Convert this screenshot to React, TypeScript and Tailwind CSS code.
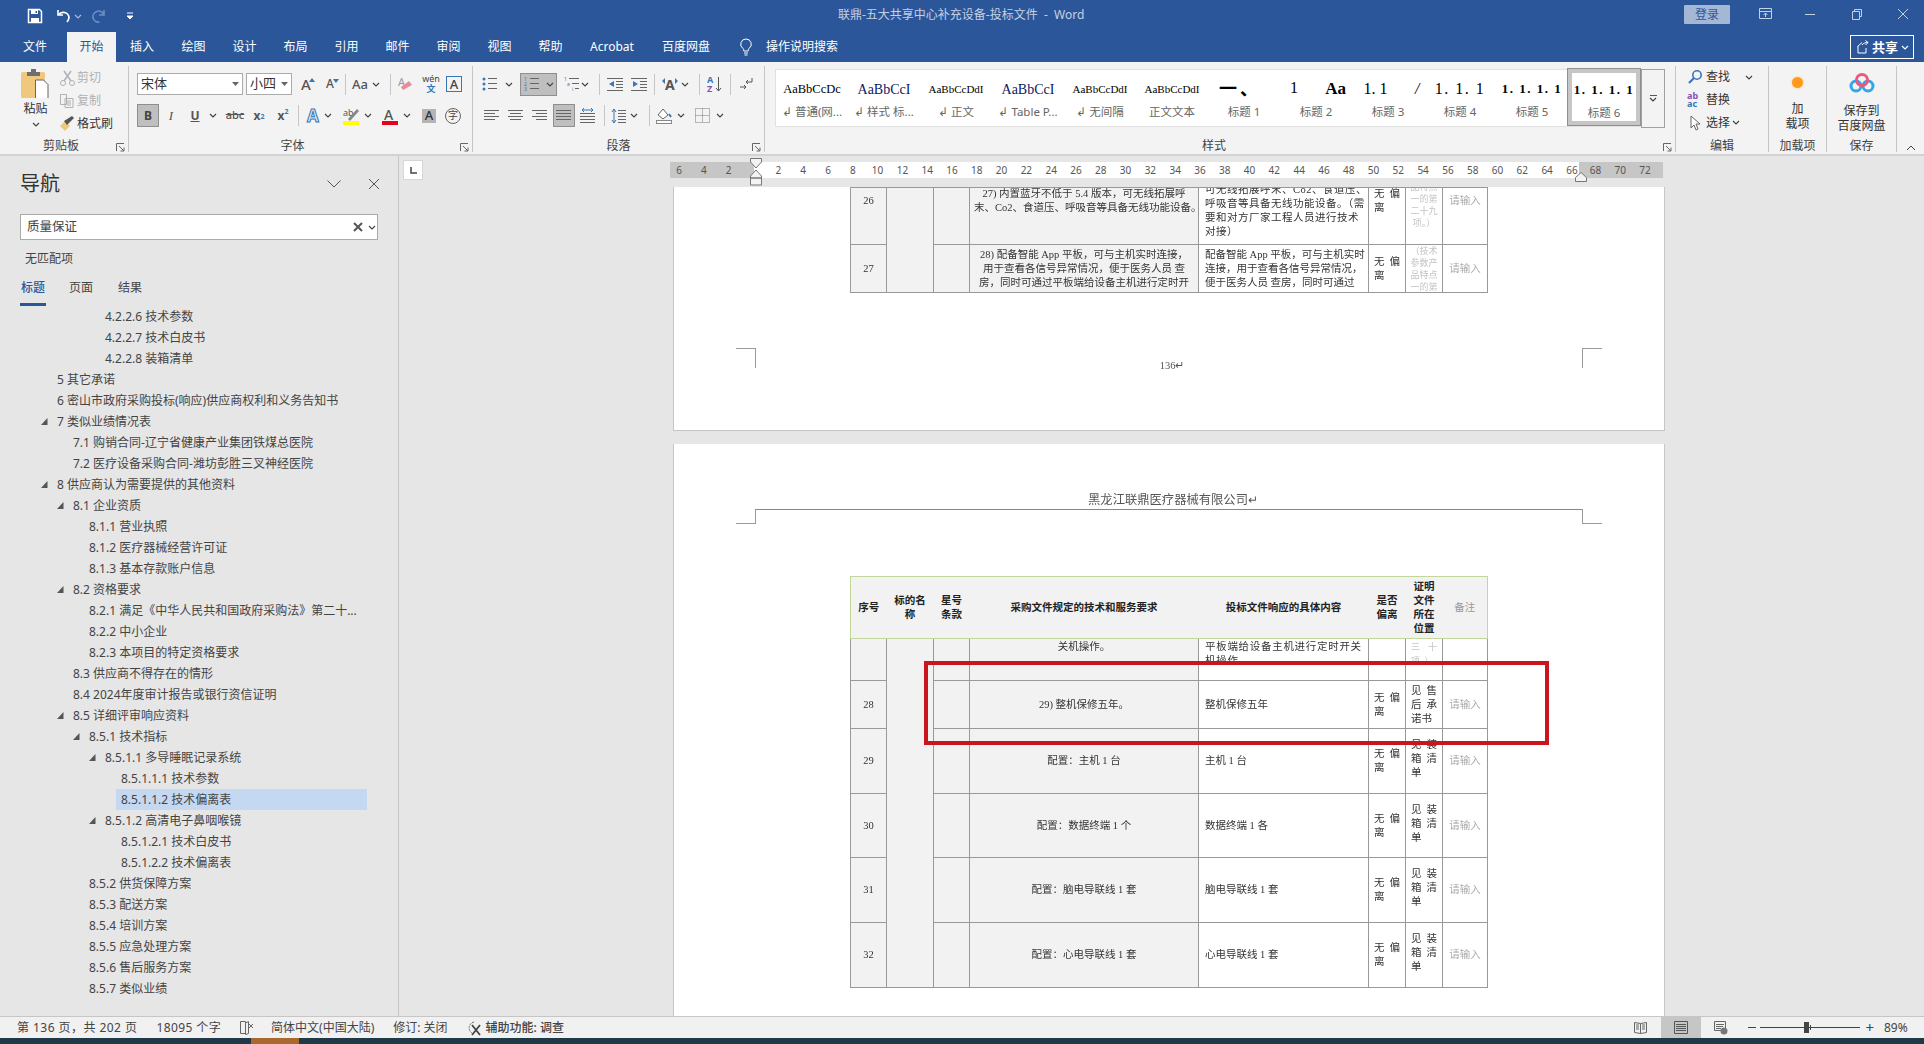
import React from "react";

const UI = "[font-family:'Noto_Sans','Noto_Sans_CJK_SC',sans-serif]";
const SERIF = "[font-family:'Liberation_Serif','Noto_Sans_CJK_SC',serif]";

const Chev = ({ c = "#444" }: { c?: string }) => (
  <svg width="8" height="5" viewBox="0 0 8 5" className="shrink-0"><path d="M1 1l3 3 3-3" fill="none" stroke={c} strokeWidth="1.2" /></svg>
);
const Box = ({ className = "", children }: { className?: string; children?: React.ReactNode }) => (
  <div className={`flex items-center justify-center shrink-0 ${className}`}>{children}</div>
);
const Div = ({ className = "" }: { className?: string }) => <div className={`w-px h-[21px] bg-[#c6c6c6] shrink-0 ${className}`} />;
const Ic = ({ children, w = 20, h = 20 }: { children: React.ReactNode; w?: number; h?: number }) => (
  <svg width={w} height={h} viewBox={`0 0 ${w} ${h}`} className="shrink-0">{children}</svg>
);
const Lines = ({ d, c = "#666" }: { d: number[][]; c?: string }) => (
  <>{d.map((l, i) => <path key={i} d={`M${l[0]} ${l[2] + 0.5}H${l[1]}`} stroke={c} />)}</>
);
const Launcher = () => (
  <svg width="9" height="9" viewBox="0 0 9 9" className="absolute right-[3px] bottom-0"><path d="M0.5 8V0.5H8M3 3l5 5M8 4.5V8H4.5" fill="none" stroke="#666" /></svg>
);

const Group = ({ w, label, children, launcher, labelClass = "" }: { w: string; label: string; children: React.ReactNode; launcher?: boolean; labelClass?: string }) => (
  <div className={`relative mt-[4px] h-[86px] border-r border-[#c6c6c6] shrink-0 flex flex-col ${w}`}>
    <div className="h-[72px] shrink-0">{children}</div>
    <div className={`text-center text-[12px] leading-[16px] text-[#444] ${labelClass}`}>{label}</div>
    {launcher && <Launcher />}
  </div>
);

const tabs: [string, string][] = [
  ["插入", "w-[52px]"], ["绘图", "w-[51px]"], ["设计", "w-[51px]"], ["布局", "w-[51px]"], ["引用", "w-[51px]"], ["邮件", "w-[51px]"],
  ["审阅", "w-[51px]"], ["视图", "w-[51px]"], ["帮助", "w-[51px]"], ["Acrobat", "w-[72px]"], ["百度网盘", "w-[76px]"],
];

function TitleBar() {
  return (
    <div className="h-[32px] bg-[#2b579a] flex items-center relative shrink-0">
      <div className="ml-[27px]"><Ic w={16} h={16}><path d="M1.5 1.5h11l2 2v11h-13z" fill="none" stroke="#fff" strokeWidth="1.5" /><path d="M4 2h7v4H4zM4 10h8v4H4z" fill="#fff" /><path d="M8.5 3h1.5v2H8.5z" fill="#2b579a" /></Ic></div>
      <div className="ml-[13px]"><Ic w={16} h={16}><path d="M2 2v5h5" fill="none" stroke="#fff" strokeWidth="1.6" /><path d="M2.5 6.5C5 4 9 3.5 11.5 6c2 2.2 1.5 5.5-.5 8" fill="none" stroke="#fff" strokeWidth="1.6" /></Ic></div>
      <div className="ml-[2px]"><Chev c="#a9bcd8" /></div>
      <div className="ml-[9px]"><Ic w={16} h={16}><path d="M13 2v5H8" fill="none" stroke="#6f8fbf" strokeWidth="1.6" /><path d="M12.5 6.5A5.5 5.5 0 1 0 8.5 14" fill="none" stroke="#6f8fbf" strokeWidth="1.6" /></Ic></div>
      <div className="ml-[18px]"><Ic w={10} h={10}><path d="M2 2h6M2 5l3 3 3-3z" fill="#fff" stroke="#fff" /></Ic></div>
      <div className="absolute left-[838px] top-0 h-[30px] flex items-center text-[12px] text-[#c4d0e4] whitespace-nowrap">联鼎-五大共享中心补充设备-投标文件 &nbsp;-&nbsp; Word</div>
      <div className="ml-auto flex items-center">
        <Box className="w-[46px] h-[19px] bg-[#a4b8d5] text-[#2b579a] text-[12px] rounded-[1px] -mt-[3px]">登录</Box>
        <Box className="ml-[24px] w-[22px] -mt-[4px]"><Ic w={14} h={14}><path d="M1.5 1.5h12v10h-12zM1.5 4.5h12M7.5 10V6M5.5 8l2-2 2 2" fill="none" stroke="#c4d0e4" /></Ic></Box>
        <Box className="ml-[23px] w-[22px] -mt-[4px]"><Ic w={12} h={12}><path d="M1 6.5h10" stroke="#c4d0e4" /></Ic></Box>
        <Box className="ml-[25px] w-[22px] -mt-[4px]"><Ic w={12} h={12}><path d="M1.5 3.5h7v8h-7zM3.5 3V1.5h7v7H9" fill="none" stroke="#c4d0e4" /></Ic></Box>
        <Box className="ml-[24px] w-[22px] mr-[10px] -mt-[4px]"><Ic w={12} h={12}><path d="M1 1l10 10M11 1L1 11" stroke="#c4d0e4" /></Ic></Box>
      </div>
    </div>
  );
}

function TabBar() {
  return (
    <div className="h-[30px] bg-[#2b579a] flex items-center relative shrink-0 text-[12px] text-white">
      <Box className="ml-[9px] w-[52px] h-full">文件</Box>
      <Box className="ml-[6px] w-[49px] h-full bg-[#f3f3f3] text-[#2b579a]">开始</Box>
      {tabs.map(([t, w]) => <Box key={t} className={`${w} h-full`}>{t}</Box>)}
      <div className="ml-[14px]"><Ic w={16} h={20}><path d="M8 2a5.2 5.2 0 0 0-3 9.5c.6.6.8 1.3.8 2.5h4.4c0-1.2.2-1.9.8-2.5A5.2 5.2 0 0 0 8 2zM6 16h4M6.5 18h3" fill="none" stroke="#fff" /></Ic></div>
      <div className="ml-[12px]">操作说明搜索</div>
      <div className="ml-auto mr-[10px] w-[64px] h-[24px] border border-white flex items-center pl-[5px] gap-[3px]">
        <Ic w={13} h={14}><path d="M2 6v7h8V8M1.5 6.5L6 2.5M6 5c1.5-2 3.5-2.5 6-2.5M9.5 .5l2.5 2-2.5 2.5" fill="none" stroke="#fff" /></Ic>
        <span className="font-semibold text-[13px] leading-none">共享</span>
        <Chev c="#fff" />
      </div>
    </div>
  );
}

function Clipboard() {
  return (
    <Group w="w-[129px]" label="剪贴板" launcher labelClass="pr-[6px]">
      <div className="flex">
        <div className="w-[59px] flex flex-col items-center pl-[12px] pt-[3px] shrink-0">
          <Ic w={30} h={29}>
            <rect x="0" y="3" width="24" height="26" rx="1.5" fill="#f0c87d" />
            <path d="M6 3h4V0h5v3h4v4H6z" fill="#6e6e6e" />
            <path d="M14.5 11h8l4.5 4.5V30h-12.5z" fill="#fff" stroke="#666" />
          </Ic>
          <div className="text-[12px] leading-[14px] mt-[4px] text-[#333]">粘贴</div>
          <div className="mt-[6px]"><Chev /></div>
        </div>
        <div className="flex flex-col text-[12px] text-[#b1b1b1] pt-[1px]">
          <div className="h-[22px] flex items-center">
            <Ic w={18} h={16}><circle cx="4" cy="13" r="2.5" fill="none" stroke="#b1b1b1" /><circle cx="13" cy="13" r="2.5" fill="none" stroke="#b1b1b1" /><path d="M5 11L12 1M12 11L5 1" stroke="#b1b1b1" strokeWidth="1.5" /></Ic><span>剪切</span>
          </div>
          <div className="h-[23px] flex items-center">
            <Ic w={18} h={16}><path d="M1.5 1.5h6v10h-6zM6 5.5h8v9H6zM8 8h4M8 10h4M8 12h4" fill="#f3f3f3" stroke="#b1b1b1" /></Ic><span>复制</span>
          </div>
          <div className="h-[23px] flex items-center text-[#333]">
            <Ic w={18} h={16}><path d="M1 10l5-5 5 5-5 5z" fill="#f0c87d" /><path d="M5 5l3 4 7-7-2-2z" fill="#555" /></Ic><span className="ml-0">格式刷</span>
          </div>
        </div>
      </div>
    </Group>
  );
}

const A = ({ cls = "", size = "text-[16px]", children = "A" }: { cls?: string; size?: string; children?: React.ReactNode }) => (
  <span className={`${size} leading-none font-medium text-[#555] ${cls}`}>{children}</span>
);

function FontGroup() {
  return (
    <Group w="w-[344px]" label="字体" launcher labelClass="pr-[16px]">
      <div className="pl-[8px] pt-[7px]">
        <div className="flex items-center h-[22px]">
          <div className="w-[106px] h-[22px] bg-white border border-[#ababab] flex items-center justify-between px-[3px] text-[13px] text-[#333] shrink-0">宋体<svg width="7" height="4"><path d="M0 0h7L3.5 4z" fill="#666" /></svg></div>
          <div className="ml-[3px] w-[46px] h-[22px] bg-white border border-[#ababab] flex items-center justify-between px-[3px] text-[13px] text-[#333] shrink-0">小四<svg width="7" height="4"><path d="M0 0h7L3.5 4z" fill="#666" /></svg></div>
          <Box className="ml-[2px] w-[24px] relative"><A size="text-[15px]" /><svg width="6" height="4" className="absolute right-[3px] top-[1px]"><path d="M0 4h6L3 0z" fill="#3a75b5" /></svg></Box>
          <Box className="w-[24px] relative"><A size="text-[12px]" /><svg width="6" height="4" className="absolute right-[3px] top-[1px]"><path d="M0 0h6L3 4z" fill="#3a75b5" /></svg></Box>
          <Div className="ml-[3px]" />
          <Box className="ml-[4px] w-[20px]"><A size="text-[13px]">Aa</A></Box>
          <Box className="w-[12px]"><Chev /></Box>
          <Div className="ml-[8px]" />
          <Box className="ml-[3px] w-[24px]"><Ic w={20} h={18}><text x="2" y="11" fontSize="11" fill="#999">A</text><path d="M7 15l-2-3 8-6 3 4z" fill="#e88b9a" /></Ic></Box>
          <Box className="ml-px w-[24px] flex-col text-[9px] leading-[10px]"><span className="text-[#444]">wén</span><span className="text-[#2f78c0] font-bold">文</span></Box>
          <Box className="ml-[3px] w-[16px] h-[16px] border border-[#3a75b5] text-[13px] font-medium text-[#444] leading-none">A</Box>
        </div>
        <div className="flex items-center h-[23px] mt-[9px]">
          <Box className="w-[22px] h-[23px] bg-[#bfbfbf] border border-[#8f8f8f] text-[12px] font-bold text-[#444]">B</Box>
          <Box className="w-[24px] text-[13px] italic text-[#555] [font-family:'Liberation_Serif',serif]">I</Box>
          <Box className="w-[24px] text-[12px] font-bold underline text-[#555]">U</Box>
          <Box className="w-[12px]"><Chev /></Box>
          <Box className="ml-[4px] w-[24px] text-[11px] font-medium line-through text-[#555]">abc</Box>
          <Box className="w-[24px] text-[12px] font-bold text-[#555]">x<sub className="text-[7px] text-[#3a75b5]">2</sub></Box>
          <Box className="w-[24px] text-[12px] font-bold text-[#555]">x<sup className="text-[7px] text-[#3a75b5]">2</sup></Box>
          <Div className="ml-[3px]" />
          <Box className="ml-[4px] w-[20px]"><span className="text-[17px] font-bold leading-none text-[#dbe8f6] [-webkit-text-stroke:1px_#3a75b5]">A</span></Box>
          <Box className="w-[10px]"><Chev /></Box>
          <Box className="ml-[8px] w-[20px]"><Ic w={18} h={18}><text x="1" y="9" fontSize="9" fill="#555">ab</text><path d="M6 12l9-10 2 2-9 10z" fill="#888" /><rect x="1" y="14" width="16" height="4" fill="#ffff00" /></Ic></Box>
          <Box className="ml-px w-[12px]"><Chev /></Box>
          <Box className="ml-[6px] w-[20px]"><Ic w={18} h={18}><text x="3" y="13" fontSize="14" fill="#555" fontWeight="500">A</text><rect x="1" y="14" width="16" height="4" fill="#e8001c" /></Ic></Box>
          <Box className="ml-px w-[12px]"><Chev /></Box>
          <Box className="ml-[6px] w-[20px]"><div className="w-[14px] h-[14px] bg-[#b5b5b5] flex items-center justify-center text-[13px] font-medium text-[#333] leading-none">A</div></Box>
          <Box className="ml-[4px] w-[20px]"><div className="w-[16px] h-[16px] rounded-full border border-[#666] flex items-center justify-center text-[10px] text-[#444]">字</div></Box>
        </div>
      </div>
    </Group>
  );
}

const Bul = ({ nums }: { nums?: boolean }) => (
  <Ic w={18} h={16}>
    {nums ? <text x="0" y="5" fontSize="5" fill="#3a75b5">1</text> : <circle cx="2" cy="3" r="1.5" fill="#3a75b5" />}
    {nums ? <text x="0" y="10" fontSize="5" fill="#3a75b5">2</text> : <circle cx="2" cy="8" r="1.5" fill="#3a75b5" />}
    {nums ? <text x="0" y="15" fontSize="5" fill="#3a75b5">3</text> : <circle cx="2" cy="13" r="1.5" fill="#3a75b5" />}
    <Lines d={[[6, 15, 2], [6, 15, 7], [6, 15, 12]]} />
  </Ic>
);

function ParaGroup() {
  const al = (s: number[][]) => <Ic w={16} h={14}><Lines d={s} /></Ic>;
  return (
    <Group w="w-[292px]" label="段落" launcher>
      <div className="pt-[7px]">
        <div className="flex items-center h-[22px]">
          <Box className="ml-[8px] w-[20px]"><Bul /></Box>
          <Box className="ml-[2px] w-[12px]"><Chev /></Box>
          <div className="ml-[5px] w-[37px] h-[23px] bg-[#bfbfbf] border border-[#8f8f8f] flex items-center justify-center gap-[4px] shrink-0"><Bul nums /><Chev /></div>
          <Box className="ml-[7px] w-[16px]"><Ic w={16} h={16}><text x="0" y="5" fontSize="5" fill="#3a75b5">1</text><text x="3" y="10" fontSize="5" fill="#3a75b5">a</text><text x="8" y="15" fontSize="5" fill="#3a75b5">i</text><Lines d={[[5, 15, 2], [8, 15, 7], [11, 15, 12]]} /></Ic></Box>
          <Box className="w-[10px]"><Chev /></Box>
          <Div className="ml-[9px]" />
          <Box className="ml-[5px] w-[20px]"><Ic w={17} h={14}><Lines d={[[0, 16, 1], [9, 16, 4], [9, 16, 7], [9, 16, 10], [0, 16, 13]]} /><path d="M7 4v6L2 7z" fill="#3a75b5" /></Ic></Box>
          <Box className="ml-[4px] w-[20px]"><Ic w={17} h={14}><Lines d={[[0, 16, 1], [9, 16, 4], [9, 16, 7], [9, 16, 10], [0, 16, 13]]} /><path d="M2 4v6l5-3z" fill="#3a75b5" /></Ic></Box>
          <Div className="ml-[5px]" />
          <Box className="ml-[5px] w-[20px]"><Ic w={18} h={16}><text x="4" y="14" fontSize="14" fontWeight="700" fill="#555">A</text><path d="M1 5l3-3v6zM17 5l-3-3v6z" fill="#3a75b5" /></Ic></Box>
          <Box className="w-[10px]"><Chev /></Box>
          <Div className="ml-[9px]" />
          <Box className="ml-[5px] w-[20px]"><Ic w={16} h={18}><text x="0" y="8" fontSize="9" fontWeight="700" fill="#3a75b5">A</text><text x="0" y="17" fontSize="9" fontWeight="700" fill="#8a4fb5">Z</text><path d="M11.5 2v14M9 13l2.5 3 2.5-3" fill="none" stroke="#555" /></Ic></Box>
          <Div className="ml-[5px]" />
          <Box className="ml-[5px] w-[20px]"><Ic w={14} h={14}><path d="M13 1v4H7M9 3L7 5l2 2" fill="none" stroke="#555" /><path d="M1 10h6M5 8l2 2-2 2" fill="none" stroke="#555" /></Ic></Box>
        </div>
        <div className="flex items-center h-[23px] mt-[9px]">
          <Box className="ml-[9px] w-[20px]">{al([[0, 15, 1], [0, 11, 4], [0, 15, 7], [0, 11, 10]])}</Box>
          <Box className="ml-[4px] w-[20px]">{al([[0, 15, 1], [2, 13, 4], [0, 15, 7], [2, 13, 10]])}</Box>
          <Box className="ml-[4px] w-[20px]">{al([[0, 15, 1], [4, 15, 4], [0, 15, 7], [4, 15, 10]])}</Box>
          <Box className="ml-[3px] w-[22px] h-[23px] bg-[#bfbfbf] border border-[#8f8f8f]">{al([[0, 15, 1], [0, 15, 4], [0, 15, 7], [0, 15, 10]])}</Box>
          <Box className="ml-[3px] w-[20px]"><Ic w={16} h={16}><Lines d={[[0, 15, 5], [0, 15, 8], [0, 15, 11], [0, 15, 14]]} /><path d="M2 2h11M4 0L2 2l2 2M11 0l2 2-2 2" fill="none" stroke="#3a75b5" /></Ic></Box>
          <Div className="ml-[6px]" />
          <Box className="ml-[4px] w-[20px]"><Ic w={16} h={16}><path d="M3 1v14M1 4l2-3 2 3M1 12l2 3 2-3" fill="none" stroke="#3a75b5" /><Lines d={[[7, 15, 2], [7, 15, 5], [7, 15, 8], [7, 15, 11], [7, 15, 14]]} /></Ic></Box>
          <Box className="w-[10px]"><Chev /></Box>
          <Div className="ml-[10px]" />
          <Box className="ml-[4px] w-[20px]"><Ic w={17} h={17}><path d="M2 8l5-6 5 6-5 4z" fill="#fff" stroke="#666" /><path d="M13 7l2 3" stroke="#3a75b5" strokeWidth="2" /><rect x="0.5" y="13.5" width="15" height="3" fill="#fff" stroke="#888" /></Ic></Box>
          <Box className="ml-[2px] w-[10px]"><Chev /></Box>
          <Box className="ml-[6px] w-[20px]"><Ic w={15} h={15}><path d="M.5.5h14v14H.5zM7.5.5v14M.5 7.5h14" fill="none" stroke="#777" strokeDasharray="1 1" /></Ic></Box>
          <Box className="ml-[3px] w-[10px]"><Chev /></Box>
        </div>
      </div>
    </Group>
  );
}

const styles = [
  { s: <span className="text-[12.5px]">AaBbCcDc</span>, l: "↲ 普通(网..." },
  { s: <span className="text-[14px] text-[#0b1a66]">AaBbCcI</span>, l: "↲ 样式 标..." },
  { s: <span className="text-[11px]">AaBbCcDdI</span>, l: "↲ 正文" },
  { s: <span className="text-[14px] text-[#0b1a66]">AaBbCcI</span>, l: "↲ Table P..." },
  { s: <span className="text-[11px]">AaBbCcDdI</span>, l: "↲ 无间隔" },
  { s: <span className="text-[11px]">AaBbCcDdI</span>, l: "正文文本" },
  { s: <span className="text-[18px] font-bold tracking-[3px] -ml-[8px]">一、</span>, l: "标题 1" },
  { s: <span className="flex justify-between w-full pl-[4px] text-[16px]"><span>1</span><span className="text-[17px] font-bold">Aa</span></span>, l: "标题 2" },
  { s: <span className="flex justify-between w-full pl-[4px] -mr-[3px] text-[16px]"><span>1. 1</span><span className="italic">/</span></span>, l: "标题 3" },
  { s: <span className="text-[16px] tracking-[1.5px]">1. 1. 1</span>, l: "标题 4" },
  { s: <span className="text-[13px] font-bold tracking-[1.5px]">1. 1. 1. 1</span>, l: "标题 5" },
  { s: <span className="text-[13px] font-bold tracking-[1.5px]">1. 1. 1. 1</span>, l: "标题 6" },
];

function StylesGroup() {
  return (
    <Group w="w-[911px]" label="样式" launcher labelClass="pr-[12px]">
      <div className="pl-[10px] pt-[3px] flex">
        <div className="w-[867px] h-[58px] bg-white border border-[#e1e1e1] flex shrink-0">
          {styles.map((st, i) => (
            <div key={i} className={`w-[72px] h-full flex flex-col items-center overflow-hidden shrink-0 ${i === 11 ? "border-[4px] border-[#c6c6c6] outline outline-1 outline-[#8f8f8f] -mt-px h-[58px] pt-[6px]" : "pt-[8px]"}`}>
              <div className={`h-[22px] px-[6px] w-full flex items-center justify-center overflow-hidden whitespace-nowrap text-black ${SERIF}`}>{st.s}</div>
              <div className="mt-[4px] text-[11.5px] leading-[16px] text-[#666] whitespace-nowrap">{st.l}</div>
            </div>
          ))}
        </div>
        <div className="w-[24px] h-[59px] border border-[#a0a0a0] -ml-px shrink-0 flex flex-col items-center justify-center gap-[1px] bg-[#f3f3f3]">
          <div className="w-[7px] h-px bg-[#555]" />
          <Chev />
        </div>
      </div>
    </Group>
  );
}

function EditGroup() {
  return (
    <Group w="w-[93px]" label="编辑">
      <div className="pl-[11px] text-[12px] text-[#333]">
        <div className="flex items-center h-[22px]"><Ic w={16} h={16}><circle cx="10" cy="6" r="4.2" fill="none" stroke="#3a75b5" strokeWidth="1.6" /><path d="M7 9l-5 5" stroke="#3a75b5" strokeWidth="2.2" /></Ic><span className="ml-[3px]">查找</span><span className="ml-[15px]"><Chev /></span></div>
        <div className="flex items-center h-[23px]"><span className="w-[17px] text-[9px] leading-[8px] font-bold text-[#8a4fb5]">ab<br /><span className="text-[#3a75b5]">ac</span></span><span className="ml-[2px]">替换</span></div>
        <div className="flex items-center h-[23px]"><Ic w={16} h={16}><path d="M4 1v12l3-3 2 5 2-1-2-5h4z" fill="#fff" stroke="#666" /></Ic><span className="ml-[3px]">选择</span><span className="ml-[2px]"><Chev /></span></div>
      </div>
    </Group>
  );
}

function RibbonEnd() {
  return (
    <>
      <Group w="w-[58px]" label="加载项">
        <div className="flex flex-col items-center pt-[9px] text-[12px] leading-[15px] text-[#333]">
          <div className="w-[11px] h-[11px] rounded-full bg-[#ff9a1f] shadow-[0_0_3px_#ffcf90] mt-[2px]" />
          <div className="mt-[13px]">加</div>
          <div>载项</div>
        </div>
      </Group>
      <Group w="w-[70px]" label="保存">
        <div className="flex flex-col items-center pt-[5px] text-[12px] leading-[15px] text-[#333]">
          <Ic w={28} h={24}>
            <circle cx="8" cy="15" r="5" fill="none" stroke="#2fa8e8" strokeWidth="3" />
            <circle cx="20" cy="15" r="5" fill="none" stroke="#2fa8e8" strokeWidth="3" />
            <circle cx="14" cy="9" r="5.5" fill="none" stroke="#ea5a7b" strokeWidth="3" />
          </Ic>
          <div className="mt-[8px]">保存到</div>
          <div>百度网盘</div>
        </div>
      </Group>
      <div className="flex-1 flex items-end justify-center pb-[3px]">
        <svg width="10" height="6"><path d="M1 5l4-4 4 4" fill="none" stroke="#444" /></svg>
      </div>
    </>
  );
}

type T = [string, number, boolean?, boolean?];
const tree: T[] = [
  ["4.2.2.6 技术参数", 4], ["4.2.2.7 技术白皮书", 4], ["4.2.2.8 装箱清单", 4], ["5 其它承诺", 1],
  ["6 密山市政府采购投标(响应)供应商权利和义务告知书", 1], ["7 类似业绩情况表", 1, true],
  ["7.1 购销合同-辽宁省健康产业集团铁煤总医院", 2], ["7.2 医疗设备采购合同-潍坊彭胜三叉神经医院", 2],
  ["8 供应商认为需要提供的其他资料", 1, true], ["8.1 企业资质", 2, true], ["8.1.1 营业执照", 3], ["8.1.2 医疗器械经营许可证", 3],
  ["8.1.3 基本存款账户信息", 3], ["8.2 资格要求", 2, true], ["8.2.1 满足《中华人民共和国政府采购法》第二十...", 3], ["8.2.2 中小企业", 3],
  ["8.2.3 本项目的特定资格要求", 3], ["8.3 供应商不得存在的情形", 2], ["8.4 2024年度审计报告或银行资信证明", 2], ["8.5 详细评审响应资料", 2, true],
  ["8.5.1 技术指标", 3, true], ["8.5.1.1 多导睡眠记录系统", 4, true], ["8.5.1.1.1 技术参数", 5], ["8.5.1.1.2 技术偏离表", 5, false, true],
  ["8.5.1.2 高清电子鼻咽喉镜", 4, true], ["8.5.1.2.1 技术白皮书", 5], ["8.5.1.2.2 技术偏离表", 5], ["8.5.2 供货保障方案", 3],
  ["8.5.3 配送方案", 3], ["8.5.4 培训方案", 3], ["8.5.5 应急处理方案", 3], ["8.5.6 售后服务方案", 3], ["8.5.7 类似业绩", 3],
];
const pad: Record<number, string> = { 1: "pl-[57px]", 2: "pl-[73px]", 3: "pl-[89px]", 4: "pl-[105px]", 5: "pl-[121px]" };

function Nav() {
  return (
    <div className="w-[399px] shrink-0 bg-[#e6e6e6] border-r border-[#c6c6c6] flex flex-col overflow-hidden text-[#444]">
      <div className="h-[55px] shrink-0 flex items-center pl-[20px] pr-[18px]">
        <span className="text-[20px] text-[#333]">导航</span>
        <span className="ml-auto"><svg width="14" height="8"><path d="M.5.5L7 7l6.5-6.5" fill="none" stroke="#555" /></svg></span>
        <span className="ml-[27px]"><svg width="12" height="12"><path d="M1 1l10 10M11 1L1 11" stroke="#555" /></svg></span>
      </div>
      <div className="mt-[3px] mx-[20px] h-[26px] shrink-0 bg-white border border-[#ababab] flex items-center pl-[6px] pr-[1px] text-[12.5px]">
        质量保证
        <span className="ml-auto"><svg width="10" height="10"><path d="M1 1l8 8M9 1L1 9" stroke="#555" strokeWidth="2" /></svg></span>
        <span className="ml-[5px]"><Chev /></span>
      </div>
      <div className="h-[38px] shrink-0 flex items-center pl-[25px] text-[12px]">无匹配项</div>
      <div className="h-[28px] shrink-0 flex pl-[20px] text-[12px]">
        <div className="w-[26px] flex flex-col items-center text-[#2b579a] font-medium"><span className="h-[20px] leading-[20px]">标题</span><span className="mt-[5px] h-[3px] w-full bg-[#2b579a]" /></div>
        <span className="ml-[23px] h-[20px] leading-[20px]">页面</span>
        <span className="ml-[25px] h-[20px] leading-[20px]">结果</span>
      </div>
      <div className="flex-1 overflow-hidden text-[12px]">
        {tree.map(([label, lv, arrow, sel]) =>
          sel ? (
            <div key={label} className="h-[21px] flex items-center ml-[116px] w-[251px] pl-[5px] bg-[#c5d8f2] whitespace-nowrap">{label}</div>
          ) : (
            <div key={label} className={`h-[21px] flex items-center whitespace-nowrap ${pad[lv]}`}>
              <span className="w-[16px] -ml-[16px] shrink-0">{arrow && <svg width="7" height="7" className="block"><path d="M6.5 0v7H0z" fill="#555" /></svg>}</span>
              {label}
            </div>
          )
        )}
      </div>
    </div>
  );
}

const nums = (a: number[], cls = "") => a.map((n) => <span key={n} className={`w-[24.8px] shrink-0 text-center ${cls}`}>{n}</span>);
const range = (a: number, b: number) => { const r: number[] = []; for (let i = a; i <= b; i += 2) r.push(i); return r; };

function Ruler() {
  return (
    <div className="h-[31px] shrink-0 flex relative">
      <div className="mt-[4px] ml-[4px] w-[20px] h-[20px] bg-white border border-[#d6d6d6] flex items-center justify-center shrink-0">
        <svg width="7" height="7"><path d="M1 0v6h6" fill="none" stroke="#444" strokeWidth="1.5" /></svg>
      </div>
      <div className="ml-[247px] mt-[6px] w-[993px] h-[16px] flex text-[10px] leading-[16px] text-[#555] [font-family:'Noto_Sans',sans-serif]">
        <div className="w-[84px] bg-[#c6c6c6] flex justify-end pr-[13px] shrink-0">{nums([6, 4, 2])}</div>
        <div className="w-[825px] bg-white flex pl-[12px] shrink-0 overflow-hidden">{nums(range(2, 66))}</div>
        <div className="w-[84px] bg-[#c6c6c6] flex pl-[4px] shrink-0">{nums(range(68, 72))}</div>
      </div>
      <svg width="12" height="28" className="absolute left-[351px] top-[2px]"><path d="M.5.5h11V4L6 10 .5 4zM6 12l5.5 6v2H.5v-2zM.5 20h11v7H.5z" fill="#f3f3f3" stroke="#777" /></svg>
      <svg width="12" height="10" className="absolute left-[1176px] top-[16px]"><path d="M6 .5l5.5 5v4H.5v-4z" fill="#f3f3f3" stroke="#777" /></svg>
    </div>
  );
}

const cols = ["w-[36px]", "w-[47px]", "w-[36px]", "w-[229px]", "w-[170px]", "w-[37px]", "w-[37px]", "w-[45px]"];
const Cg = () => <colgroup>{cols.map((c, i) => <col key={i} className={c} />)}</colgroup>;

const Td = ({ grey, left, h, children, cls = "", span }: { grey?: boolean; left?: boolean; h: string; children?: React.ReactNode; cls?: string; span?: number }) => (
  <td rowSpan={span} className={`p-0 border border-[#999] ${grey ? "bg-[#f2f2f2]" : "bg-white"} ${cls}`}>
    <div className={`${h} overflow-hidden flex flex-col justify-center whitespace-nowrap ${left ? "text-left px-[6px]" : "text-center px-[4px]"}`}>{children}</div>
  </td>
);
const Two = ({ a, b, c }: { a: string; b?: string; c?: string }) => (
  <div className="px-[1px] whitespace-normal">
    <div className="[text-align-last:justify]">{a}</div>
    {b && <div className={c ? "[text-align-last:justify]" : "text-left"}>{b}</div>}
    {c && <div className="text-left">{c}</div>}
  </div>
);
const Hint = () => <span className="text-[#aaa]">请输入</span>;

const rows2: [string, string, string, string][] = [
  ["29", "配置：主机 1 台", "主机 1 台", "h-[64px]"],
  ["30", "配置：数据终端 1 个", "数据终端 1 各", "h-[63px]"],
  ["31", "配置：脑电导联线 1 套", "脑电导联线 1 套", "h-[64px]"],
  ["32", "配置：心电导联线 1 套", "心电导联线 1 套", "h-[64px]"],
];

function Page1() {
  return (
    <div className="h-[244px] bg-white border-x border-b border-[#c6c6c6] shrink-0 overflow-hidden">
      <table className={`ml-[176px] w-[637px] table-fixed border-collapse text-[10.5px] leading-[14px] text-[#333] border-b border-[#666] blur-[0.3px] ${SERIF}`}>
        <Cg />
        <tbody>
          <tr className="border-b border-[#666]">
            <Td grey h="h-[56px]"><div className="-mt-[30px]">26</div></Td>
            <Td grey span={2} h="h-[104px]" />
            <Td grey h="h-[56px]" />
            <Td grey h="h-[56px]"><div className="-mt-[30px]"><div>27) 内置蓝牙不低于 5.4 版本，可无线拓展呼</div><div>末、Co2、食道压、呼吸音等具备无线功能设备。</div></div></Td>
            <Td left h="h-[56px]"><div className="h-[56px] flex flex-col justify-end pb-[5px] tracking-[0.5px]"><div>可无线拓展呼末、Co2、食道压、</div><div>呼吸音等具备无线功能设备。（需</div><div>要和对方厂家工程人员进行技术</div><div>对接）</div></div></Td>
            <Td h="h-[56px]"><div className="-mt-[30px]"><Two a="无 偏" b="离" /></div></Td>
            <Td h="h-[56px]"><div className="text-[#c4c4c4] text-[9px] leading-[12px] -mt-[22px]">品特点<br />一的第<br />二十九<br />项。）</div></Td>
            <Td h="h-[56px]"><div className="-mt-[30px]"><Hint /></div></Td>
          </tr>
          <tr>
            <Td grey h="h-[47px]">27</Td>
            <Td grey h="h-[47px]" />
            <Td grey h="h-[47px]"><div>28) 配备智能 App 平板，可与主机实时连接，</div><div>用于查看各信号异常情况，便于医务人员 查</div><div>房，同时可通过平板端给设备主机进行定时开</div></Td>
            <Td left h="h-[47px]"><div>配备智能 App 平板，可与主机实时</div><div>连接，用于查看各信号异常情况，</div><div>便于医务人员 查房，同时可通过</div></Td>
            <Td h="h-[47px]"><Two a="无 偏" b="离" /></Td>
            <Td h="h-[47px]"><div className="text-[#c4c4c4] text-[9px] leading-[12px]">（技术<br />参数产<br />品特点<br />一的第</div></Td>
            <Td h="h-[47px]"><Hint /></Td>
          </tr>
        </tbody>
      </table>
      <div className="mt-[55px] px-[62px] flex justify-between">
        <div className="w-[20px] h-[20px] border-t border-r border-[#999]" />
        <div className={`text-[10.5px] leading-[14px] self-end text-[#555] -mb-[5px] pl-[6px] blur-[0.3px] ${SERIF}`}>136↵</div>
        <div className="w-[20px] h-[20px] border-t border-l border-[#999]" />
      </div>
    </div>
  );
}

function Page2() {
  const H = ({ children, cls = "" }: { children?: React.ReactNode; cls?: string }) => (
    <td className={`p-0 bg-[#f2f2f2] border-y border-[#c3d69b] ${cls}`}><div className="h-[61px] flex items-center justify-center text-center font-bold leading-[14px] text-[#222] px-[4px]"><div>{children}</div></div></td>
  );
  return (
    <div className="relative mt-[13px] flex-1 bg-white border-x border-[#c6c6c6] overflow-hidden">
      <div className={`pt-[49px] pl-[8px] h-[64px] text-center text-[12.3px] leading-[15px] text-[#555] blur-[0.3px] ${SERIF}`}>黑龙江联鼎医疗器械有限公司↵</div>
      <div className="mt-px px-[62px] flex">
        <div className="w-[20px] h-[15px] border-b border-r border-[#999]" />
        <div className="flex-1 border-t border-[#888]" />
        <div className="w-[20px] h-[15px] border-b border-l border-[#999]" />
      </div>
      <table className={`mt-[52px] ml-[176px] w-[637px] table-fixed border-collapse text-[10.5px] leading-[14px] text-[#333] border-b border-[#666] blur-[0.3px] ${SERIF}`}>
        <Cg />
        <tbody>
          <tr>
            <H cls="border-l border-l-[#c3d69b]">序号</H><H>标的名称</H><H>星号条款</H>
            <H>采购文件规定的技术和服务要求</H><H>投标文件响应的具体内容</H><H>是否偏离</H><H>证明文件所在位置</H>
            <H cls="border-r border-r-[#c3d69b]"><span className="font-normal text-[#999]">备注</span></H>
          </tr>
          <tr>
            <Td grey h="h-[41px]" />
            <Td grey span={6} h="h-[341px]" />
            <Td grey h="h-[41px]" />
            <Td grey h="h-[41px]"><div className="h-[41px] pt-px">关机操作。</div></Td>
            <Td left h="h-[41px]"><div className="h-[41px] pt-px tracking-[0.7px]">平板端给设备主机进行定时开关<br />机操作</div></Td>
            <Td h="h-[41px]" />
            <Td h="h-[41px]"><div className="h-[41px] pt-px text-[#c4c4c4] text-[9px] leading-[14px]"><Two a="三 十" b="项。）" /></div></Td>
            <Td h="h-[41px]" />
          </tr>
          <tr className="border-t border-[#666]">
            <Td grey h="h-[47px]">28</Td>
            <Td grey h="h-[47px]" />
            <Td grey h="h-[47px]">29) 整机保修五年。</Td>
            <Td left h="h-[47px]">整机保修五年</Td>
            <Td h="h-[47px]"><Two a="无 偏" b="离" /></Td>
            <Td h="h-[47px]"><Two a="见 售" b="后 承" c="诺书" /></Td>
            <Td h="h-[47px]"><Hint /></Td>
          </tr>
          {rows2.map(([n, a, b, h]) => (
            <tr key={n} className="border-t border-[#777]">
              <Td grey h={h}>{n}</Td>
              <Td grey h={h} />
              <Td grey h={h}>{a}</Td>
              <Td left h={h}>{b}</Td>
              <Td h={h}><Two a="无 偏" b="离" /></Td>
              <Td h={h}><div className="-mt-[4px]"><Two a="见 装" b="箱 清" c="单" /></div></Td>
              <Td h={h}><Hint /></Td>
            </tr>
          ))}
        </tbody>
      </table>
      <div className="absolute left-[250px] top-[217px] w-[625px] h-[84px] border-[4px] border-[#c9151e]" />
    </div>
  );
}

function Status() {
  return (
    <div className="h-[22px] shrink-0 bg-[#f1f1f1] border-t border-[#c6c6c6] flex items-center text-[12px] text-[#444] relative">
      <span className="ml-[17px] whitespace-nowrap tracking-[0.45px]">第 136 页，共 202 页</span>
      <span className="ml-[19px] whitespace-nowrap tracking-[0.4px]">18095 个字</span>
      <span className="ml-[18px]"><Ic w={15} h={15}><path d="M1.5 1.5h5v12h-5zM6.5 3l3-1.5v12l-3 1z" fill="none" stroke="#666" /><path d="M10 4l4 4M14 4l-4 4" stroke="#666" /></Ic></span>
      <span className="ml-[17px] whitespace-nowrap">简体中文(中国大陆)</span>
      <span className="ml-[19px] whitespace-nowrap">修订: 关闭</span>
      <span className="ml-[19px]"><Ic w={15} h={16}><path d="M7 2a6 6 0 0 0-2 11" fill="none" stroke="#666" strokeDasharray="2 1" /><path d="M5 5l8 10M13 5L5 15" stroke="#444" strokeWidth="1.8" /></Ic></span>
      <span className="ml-[4px] font-medium whitespace-nowrap">辅助功能: 调查</span>
      <div className="ml-auto flex items-center h-full">
        <Ic w={14} h={13}><path d="M.5 1.5l6 1 6-1v10l-6 1-6-1zM6.5 2.5v10M2 4h3M2 6h3M2 8h3M8 4h3M8 6h3M8 8h3" fill="none" stroke="#666" /></Ic>
        <Box className="ml-[13px] w-[40px] h-full bg-[#c6c6c6]"><Ic w={14} h={13}><path d="M.5.5h13v12H.5z" fill="none" stroke="#555" /><Lines c="#555" d={[[2, 12, 3], [2, 12, 5], [2, 12, 7], [2, 12, 9]]} /></Ic></Box>
        <Box className="ml-[13px] w-[14px]"><Ic w={14} h={14}><path d="M.5.5h11v9H.5z" fill="none" stroke="#666" /><Lines d={[[2, 10, 3], [2, 9, 5], [2, 7, 7]]} /><circle cx="10" cy="10" r="3.5" fill="#777" /></Ic></Box>
        <span className="ml-[20px] w-[8px] h-px bg-[#444]" />
        <div className="ml-[4px] w-[100px] h-px bg-[#444] relative">
          <span className="absolute left-[44px] -top-[5px] w-[5px] h-[11px] bg-[#444]" />
          <span className="absolute left-[50px] -top-[2px] w-px h-[5px] bg-[#444]" />
        </div>
        <span className="ml-[5px] text-[15px] leading-none text-[#444]">+</span>
        <span className="ml-[10px] mr-[14px] w-[26px] text-[12px]">89%</span>
      </div>
    </div>
  );
}

export default function App() {
  return (
    <div className={`w-[1924px] h-[1044px] flex flex-col overflow-hidden bg-[#e6e6e6] ${UI}`}>
      <TitleBar />
      <TabBar />
      <div className="h-[94px] shrink-0 bg-[#f3f3f3] border-b-2 border-[#d2d2d2] flex">
        <Clipboard />
        <FontGroup />
        <ParaGroup />
        <StylesGroup />
        <EditGroup />
        <RibbonEnd />
      </div>
      <div className="flex-1 flex overflow-hidden min-h-0">
        <Nav />
        <div className="flex-1 flex flex-col min-w-0">
          <Ruler />
          <div className="flex-1 flex flex-col ml-[274px] w-[992px] min-h-0">
            <Page1 />
            <Page2 />
          </div>
        </div>
      </div>
      <Status />
      <div className="h-[6px] shrink-0 bg-[#1f3a46] flex">
        <div className="ml-[251px] w-[48px] bg-[#a9682e]" />
      </div>
    </div>
  );
}
